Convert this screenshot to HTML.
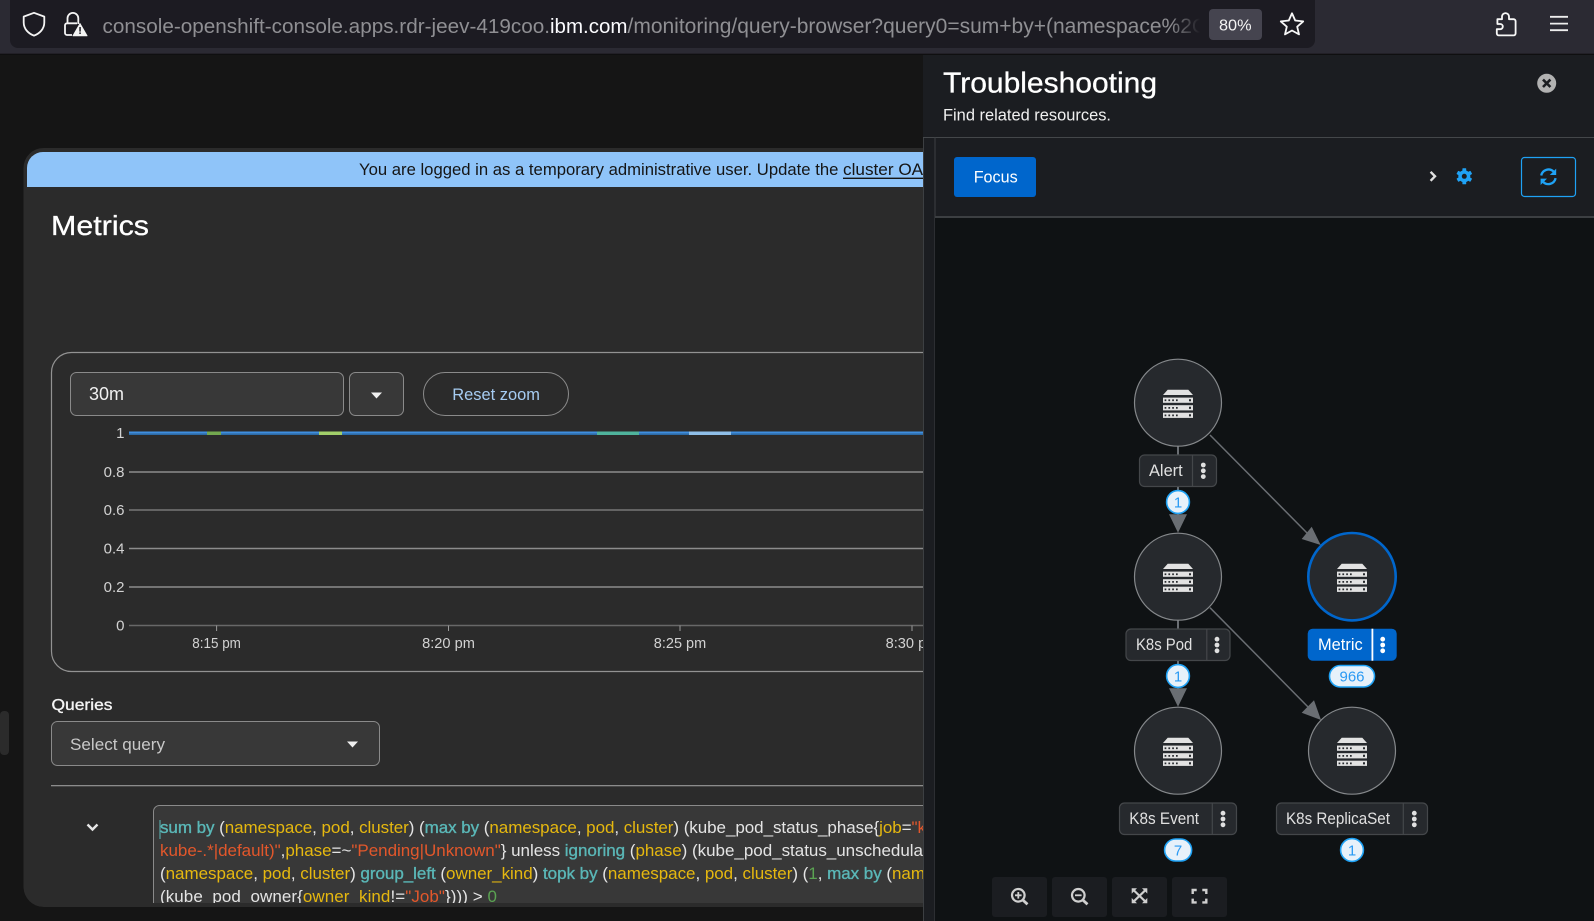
<!DOCTYPE html>
<html lang="en"><head><meta charset="utf-8"><title>Troubleshooting</title>
<style>
html,body{margin:0;padding:0;background:#151515;width:1594px;height:921px;overflow:hidden}
svg{display:block}
text{font-family:"Liberation Sans",sans-serif;white-space:pre}
.y{fill:#e6b80f}.t{fill:#5ab7b7;stroke:#5ab7b7;stroke-width:.35}.o{fill:#e2572b}.g{fill:#5ba352}
.c{font-size:17px;fill:#e4e4e4}
.l{font-size:16.5px;fill:#e0e0e0}
.b{font-size:15px;fill:#2b9af3;text-anchor:middle}
.a{font-size:15px;fill:#d2d2d2;text-anchor:end}
.x{font-size:14.5px;fill:#d2d2d2;text-anchor:middle}
</style></head><body>
<svg width="1594" height="921" viewBox="0 0 1594 921" xmlns="http://www.w3.org/2000/svg">
<defs>
<linearGradient id="fade" x1="0" x2="1" y1="0" y2="0"><stop offset="0" stop-color="#1c1b22" stop-opacity="0"/><stop offset="1" stop-color="#1c1b22"/></linearGradient>
<clipPath id="left"><path d="M0 54H923V903H0Z"/></clipPath>
<clipPath id="cardclip"><path d="M0 54H923V907H43.5A20 20 0 0 1 23.5 887V860H0Z"/></clipPath>
<clipPath id="code"><rect x="153" y="805" width="770" height="98"/></clipPath>
<clipPath id="url"><rect x="100" y="0" width="1100" height="48"/></clipPath>
<g id="srv">
<path d="M-10.3-12.3H10.3L15-7H-15Z" fill="#e2e2e2"/>
<g id="bar"><rect x="-15" y="-4.4" width="30" height="5.2" fill="#e2e2e2"/><path d="M-13.4-2.6h1.7v1.7h-1.7zM-9.6-2.6h1.7v1.7h-1.7zM-5.8-2.6h1.7v1.7h-1.7zM-2-2.6h1.7v1.7h-1.7zM11-2.8h2v2.1h-2z" fill="#26292d"/></g>
<use href="#bar" y="7.6"/><use href="#bar" y="15.1"/>
</g>
<g id="node"><circle r="43.5" fill="#26292d" stroke="#85888b" stroke-width="1.2"/><use href="#srv" y="-.7"/></g>
<g id="keb"><circle cy="-5.8" r="2.4"/><circle r="2.4"/><circle cy="5.8" r="2.4"/></g>
</defs>

<!-- browser chrome -->
<rect width="1594" height="54" fill="#2b2a33"/>
<rect y="53.7" width="1594" height="1" fill="#0c0c0d"/>
<rect x="10" y="-10" width="1305" height="58" rx="8" fill="#1c1b22"/>
<path d="M34 12.8L44.3 16.6V22.5C44.3 29 39.5 33.6 34 35.6C28.5 33.6 23.7 29 23.7 22.5V16.6Z" fill="none" stroke="#f4f4f4" stroke-width="1.8" stroke-linejoin="round"/>
<path d="M72 35H67A2 2 0 0 1 65 33V25.3A2 2 0 0 1 67 23.3H77M67.5 23V18.3A5.4 5.4 0 0 1 78.3 18.3V24" fill="none" stroke="#f4f4f4" stroke-width="1.8"/>
<path d="M80 23.6L87 35.8H73Z" fill="#f4f4f4" stroke="#f4f4f4" stroke-linejoin="round"/>
<rect x="79.3" y="27" width="1.5" height="4.6" fill="#1c1b22"/><rect x="79.3" y="32.4" width="1.5" height="1.6" fill="#1c1b22"/>
<g clip-path="url(#url)" font-size="20.5">
<text x="102.5" y="33" fill="#8f8f93" textLength="447.5" lengthAdjust="spacingAndGlyphs">console-openshift-console.apps.rdr-jeev-419coo.</text>
<text x="550" y="33" fill="#fbfbfe" textLength="77.5" lengthAdjust="spacingAndGlyphs">ibm.com</text>
<text x="627.5" y="33" fill="#8f8f93" font-size="21">/monitoring/query-browser?query0=sum+by+(namespace%2C</text>
</g>
<rect x="1170" y="5" width="30" height="38" fill="url(#fade)"/>
<rect x="1209" y="9" width="53" height="31" rx="4" fill="#45444f"/>
<text x="1219" y="30.5" font-size="16" fill="#f4f4f4" textLength="32.6" lengthAdjust="spacingAndGlyphs">80%</text>
<path d="M1292 13.3L1295.2 20.5 1303.2 21.4 1297.2 26.7 1299 34.4 1292 30.5 1285 34.4 1286.8 26.7 1280.8 21.4 1288.8 20.5Z" fill="none" stroke="#f8f8f8" stroke-width="1.8" stroke-linejoin="round"/>
<path d="M1509 19.2V16.6A3.5 3.5 0 0 0 1502 16.6V19.2H1497.4V24H1500.2A2.6 2.6 0 0 1 1500.2 29.2H1496.8V33.4A2 2 0 0 0 1498.8 35.4H1513.6A2 2 0 0 0 1515.6 33.4V21.2A2 2 0 0 0 1513.6 19.2Z" fill="none" stroke="#f8f8f8" stroke-width="1.8" stroke-linejoin="round"/>
<path d="M1550 16.8H1568M1550 23.6H1568M1550 30.2H1568" stroke="#eeeeee" stroke-width="1.8"/>

<!-- page -->
<rect y="54.7" width="1594" height="867" fill="#151515"/>
<g clip-path="url(#cardclip)">
<rect x="0" y="711" width="9" height="44" rx="4" fill="#2b2b2b"/>
<rect x="23.5" y="148" width="1000" height="759" rx="20" fill="#2b2b2b"/>
<path d="M27 187V168A16 16 0 0 1 43 152H930V187Z" fill="#8fc4f9"/>
<text x="359" y="175" font-size="16.5" fill="#151515" textLength="484" lengthAdjust="spacingAndGlyphs">You are logged in as a temporary administrative user. Update the </text>
<text x="843" y="175" font-size="16.5" fill="#151515" textLength="104" lengthAdjust="spacingAndGlyphs">cluster OAuth</text>
<rect x="843" y="177.6" width="90" height="1.4" fill="#151515"/>
<text x="51" y="235" font-size="28" fill="#fff" stroke="#fff" stroke-width=".3" textLength="98" lengthAdjust="spacingAndGlyphs">Metrics</text>

<rect x="51.5" y="352.5" width="1000" height="319" rx="20" fill="none" stroke="#929292" stroke-width="1.2"/>
<rect x="70.5" y="372.5" width="273" height="43" rx="6" fill="#383838" stroke="#8a8a8a"/>
<rect x="349.5" y="372.5" width="54" height="43" rx="6" fill="#383838" stroke="#8a8a8a"/>
<path d="M371 392.5H382L376.5 398.5Z" fill="#f0f0f0"/>
<rect x="423.5" y="372.5" width="145" height="43" rx="21.5" fill="none" stroke="#8a8a8a"/>
<text x="89" y="400" font-size="18" fill="#f0f0f0" textLength="35" lengthAdjust="spacingAndGlyphs">30m</text>
<text x="452.3" y="400" font-size="17" fill="#a6ccf2" textLength="87.7" lengthAdjust="spacingAndGlyphs">Reset zoom</text>

<path d="M129 472H923M129 548.5H923M129 587H923" stroke="#8c8c8c" stroke-width="1.5"/>
<path d="M129 510H923" stroke="#777" stroke-width="1.5"/>
<path d="M129 625.5H923" stroke="#686868" stroke-width="1.5"/>
<path d="M216.6 625.5V631M448.5 625.5V631M680 625.5V631M912 625.5V631" stroke="#9a9a9a" stroke-width="1"/>
<rect x="129" y="431.5" width="794" height="2.2" fill="#3f8fe0"/><rect x="129" y="433.7" width="794" height="1.3" fill="#2c6ba8"/>
<rect x="207" y="431.5" width="14" height="3.5" fill="#73a84f"/>
<rect x="319" y="431.5" width="23" height="3.5" fill="#a2cf6a"/>
<rect x="597" y="431.5" width="42" height="3.5" fill="#4fb39c"/>
<rect x="689" y="431.5" width="42" height="3.5" fill="#8fbfe8"/>
<text class="a" x="124.5" y="438">1</text>
<text class="a" x="124.5" y="477">0.8</text>
<text class="a" x="124.5" y="515">0.6</text>
<text class="a" x="124.5" y="553.5">0.4</text>
<text class="a" x="124.5" y="592">0.2</text>
<text class="a" x="124.5" y="630.5">0</text>
<text class="x" x="216.6" y="648" textLength="48.6" lengthAdjust="spacingAndGlyphs">8:15 pm</text>
<text class="x" x="448.5" y="648" textLength="52.8" lengthAdjust="spacingAndGlyphs">8:20 pm</text>
<text class="x" x="680" y="648" textLength="52.4" lengthAdjust="spacingAndGlyphs">8:25 pm</text>
<text class="x" x="912" y="648" textLength="52.8" lengthAdjust="spacingAndGlyphs">8:30 pm</text>

<text x="51.5" y="710" font-size="16" fill="#f4f4f4" stroke="#f4f4f4" stroke-width=".35" textLength="61" lengthAdjust="spacingAndGlyphs">Queries</text>
<rect x="51.5" y="721.5" width="328" height="44" rx="6" fill="#383838" stroke="#8a8a8a"/>
<text x="70" y="750" font-size="17" fill="#c8c8c8" textLength="95" lengthAdjust="spacingAndGlyphs">Select query</text>
<path d="M347 741.5H358L352.5 747.5Z" fill="#f0f0f0"/>
<rect x="51" y="785" width="872" height="1.3" fill="#8c8c8c"/>
<path d="M87.5 824.5L92.5 829.5 97.5 824.5" fill="none" stroke="#e6e6e6" stroke-width="2.4"/>
<g clip-path="url(#code)">
<rect x="153.5" y="805.5" width="800" height="110" rx="6" fill="#383838" stroke="#8a8a8a"/>
<rect x="159.5" y="820" width="1" height="19" fill="#5ab7b7"/>
<text class="c" x="160" y="833" textLength="766"><tspan class="t">sum by</tspan> (<tspan class="y">namespace</tspan>, <tspan class="y">pod</tspan>, <tspan class="y">cluster</tspan>) (<tspan class="t">max by</tspan> (<tspan class="y">namespace</tspan>, <tspan class="y">pod</tspan>, <tspan class="y">cluster</tspan>) (kube_pod_status_phase{<tspan class="y">job</tspan>=<tspan class="o">"k</tspan></text>
<text class="c" x="160" y="856" textLength="763"><tspan class="o">kube-.*|default)"</tspan>,<tspan class="y">phase</tspan>=~<tspan class="o">"Pending|Unknown"</tspan>} unless <tspan class="t">ignoring</tspan> (<tspan class="y">phase</tspan>) (kube_pod_status_unschedula</text>
<text class="c" x="160" y="879" textLength="765">(<tspan class="y">namespace</tspan>, <tspan class="y">pod</tspan>, <tspan class="y">cluster</tspan>) <tspan class="t">group_left</tspan> (<tspan class="y">owner_kind</tspan>) <tspan class="t">topk by</tspan> (<tspan class="y">namespace</tspan>, <tspan class="y">pod</tspan>, <tspan class="y">cluster</tspan>) (<tspan class="g">1</tspan>, <tspan class="t">max by</tspan> (<tspan class="y">nam</tspan></text>
<text class="c" x="160" y="902" textLength="337">(kube_pod_owner{<tspan class="y">owner_kind</tspan>!=<tspan class="o">"Job"</tspan>}))) &gt; <tspan class="g">0</tspan></text>
</g>
</g>

<!-- side panel -->
<rect x="923" y="55" width="671" height="866" fill="#1b1d21"/>
<rect x="923" y="137" width="1" height="784" fill="#3c3f42"/>
<rect x="923" y="137" width="671" height="1" fill="#44474a"/>
<rect x="934.5" y="137" width="1" height="784" fill="#3c3f42"/>
<rect x="935" y="216" width="659" height="705" fill="#0f1214"/>
<rect x="935" y="216" width="659" height="2" fill="#3c3f42"/>
<text x="943" y="92.7" font-size="28.5" fill="#fff" stroke="#fff" stroke-width=".3" textLength="214" lengthAdjust="spacingAndGlyphs">Troubleshooting</text>
<text x="943" y="120.7" font-size="17" fill="#f0f0f0" textLength="168" lengthAdjust="spacingAndGlyphs">Find related resources.</text>
<circle cx="1546.7" cy="83.3" r="9.5" fill="#b2b2b2"/>
<path d="M1543 79.6L1550.4 87M1550.4 79.6L1543 87" stroke="#1b1d21" stroke-width="2.6"/>
<rect x="954" y="157" width="82" height="40" rx="3" fill="#0066cc"/>
<text x="973.7" y="182.5" font-size="17" fill="#fff" textLength="44" lengthAdjust="spacingAndGlyphs">Focus</text>
<path d="M1430.6 171.8L1435 176.3 1430.6 180.8" fill="none" stroke="#e0e0e0" stroke-width="2.4"/>
<g transform="translate(1464.3 176.3)" fill="#1fa2f5">
<circle r="6"/>
<rect x="-1.9" y="-8" width="3.8" height="16" rx=".6"/>
<rect x="-1.9" y="-8" width="3.8" height="16" rx=".6" transform="rotate(60)"/>
<rect x="-1.9" y="-8" width="3.8" height="16" rx=".6" transform="rotate(120)"/>
<circle r="2.5" fill="#1b1d21"/>
</g>
<rect x="1521.5" y="157.5" width="54" height="39" rx="3" fill="none" stroke="#1fa2f5" stroke-width="1.2"/>
<g fill="#1fa2f5">
<g id="syncp"><path d="M1541.2 175.5A7.4 7.4 0 0 1 1553.6 171.6" fill="none" stroke="#1fa2f5" stroke-width="2.3"/><path d="M1556.2 168.6V175H1549.8Z"/></g>
<use href="#syncp" transform="rotate(180 1548.4 176.8)"/>
</g>

<!-- topology edges -->
<g stroke="#6a6e73" fill="none">
<path d="M1178 446V515M1178 620V689" stroke-width="2"/>
<path d="M1210 435L1310 536M1210 607.7L1311 710" stroke-width="1.5"/>
</g>
<g fill="#6a6e73">
<path d="M1169 514.3H1187L1178 532.7Z"/>
<path d="M1169 688.3H1187L1178 706.7Z"/>
<path d="M1320.7 545L1311.7 526.7 1301.7 539Z"/>
<path d="M1321 720L1314 700.3 1301.7 712.7Z"/>
</g>

<use href="#node" x="1178" y="402.7"/>
<use href="#node" x="1178" y="576.7"/>
<use href="#node" x="1178" y="750.7"/>
<use href="#node" x="1352" y="750.7"/>
<circle cx="1352" cy="576.7" r="43.7" fill="#26292d" stroke="#0066cc" stroke-width="2.6"/>
<use href="#srv" x="1352" y="576"/>

<!-- labels -->
<g fill="#26292d" stroke="#44474a" stroke-width="1.2">
<rect x="1139.5" y="455" width="77" height="31.5" rx="5"/>
<rect x="1126" y="629" width="104" height="31.5" rx="5"/>
<rect x="1119.5" y="803" width="117" height="31.5" rx="5"/>
<rect x="1276.5" y="803" width="151" height="31.5" rx="5"/>
</g>
<path d="M1192.5 455V486.5M1206.8 629V660.5M1212.3 803V834.5M1403.3 803V834.5" stroke="#44474a" stroke-width="1.2"/>
<rect x="1307.7" y="628.7" width="89" height="32" rx="5" fill="#0066cc"/>
<rect x="1371.5" y="628.7" width="1.8" height="32" fill="#fff"/>
<text class="l" x="1149" y="476" textLength="33.7" lengthAdjust="spacingAndGlyphs">Alert</text>
<text class="l" x="1136" y="650" textLength="56.3" lengthAdjust="spacingAndGlyphs">K8s Pod</text>
<text class="l" x="1129.3" y="824" textLength="69.7" lengthAdjust="spacingAndGlyphs">K8s Event</text>
<text class="l" x="1286" y="824" textLength="104" lengthAdjust="spacingAndGlyphs">K8s ReplicaSet</text>
<text class="l" x="1318" y="650" style="fill:#fff" textLength="44.7" lengthAdjust="spacingAndGlyphs">Metric</text>
<g fill="#e0e0e0">
<use href="#keb" x="1203.3" y="470.8"/><use href="#keb" x="1217" y="645"/>
<use href="#keb" x="1223" y="819"/><use href="#keb" x="1414.3" y="819"/>
</g>
<use href="#keb" x="1382.7" y="645" fill="#fff"/>

<!-- badges -->
<g fill="#e7f1fa" stroke="#1fa2f5" stroke-width="1.6">
<circle cx="1178" cy="502" r="11.4"/>
<circle cx="1178" cy="676" r="11.4"/>
<rect x="1164.6" y="839" width="27" height="22" rx="11"/>
<circle cx="1352" cy="850" r="11.4"/>
<rect x="1329.5" y="665.5" width="45" height="21.5" rx="10.7"/>
</g>
<text class="b" x="1178" y="507.5">1</text>
<text class="b" x="1178" y="681.5">1</text>
<text class="b" x="1178" y="855.5">7</text>
<text class="b" x="1352" y="855.5">1</text>
<text class="b" x="1352" y="681.5">966</text>

<!-- zoom controls -->
<g fill="#1b1d21">
<rect x="992" y="877" width="55" height="40" rx="3"/><rect x="1052" y="877" width="55" height="40" rx="3"/>
<rect x="1112" y="877" width="55" height="40" rx="3"/><rect x="1172" y="877" width="55" height="40" rx="3"/>
</g>
<g fill="none" stroke="#cfcfcf" stroke-width="2.2">
<circle cx="1018.3" cy="895.3" r="6.3"/><path d="M1022.8 900L1027.5 904.3" stroke-width="2.8"/>
<path d="M1015 895.3H1021.6M1018.3 892V898.6" stroke-width="1.8"/>
<circle cx="1078.3" cy="895.3" r="6.3"/><path d="M1082.8 900L1087.5 904.3" stroke-width="2.8"/>
<path d="M1075 895.3H1081.6" stroke-width="1.8"/>
<path d="M1134 890.5L1145 901.2M1145 890.5L1134 901.2"/>
<path d="M1192.7 894V890H1196.7M1202.3 890H1206.3V894M1206.3 898.6V902.4H1202.3M1196.7 902.4H1192.7V898.6" stroke-width="2.4"/>
</g>
<g fill="#cfcfcf">
<path d="M1131.7 888.3H1137L1131.7 893.6Z"/><path d="M1147.3 888.3H1142L1147.3 893.6Z"/>
<path d="M1131.7 903.3H1137L1131.7 898Z"/><path d="M1147.3 903.3H1142L1147.3 898Z"/>
</g>
</svg>
</body></html>
